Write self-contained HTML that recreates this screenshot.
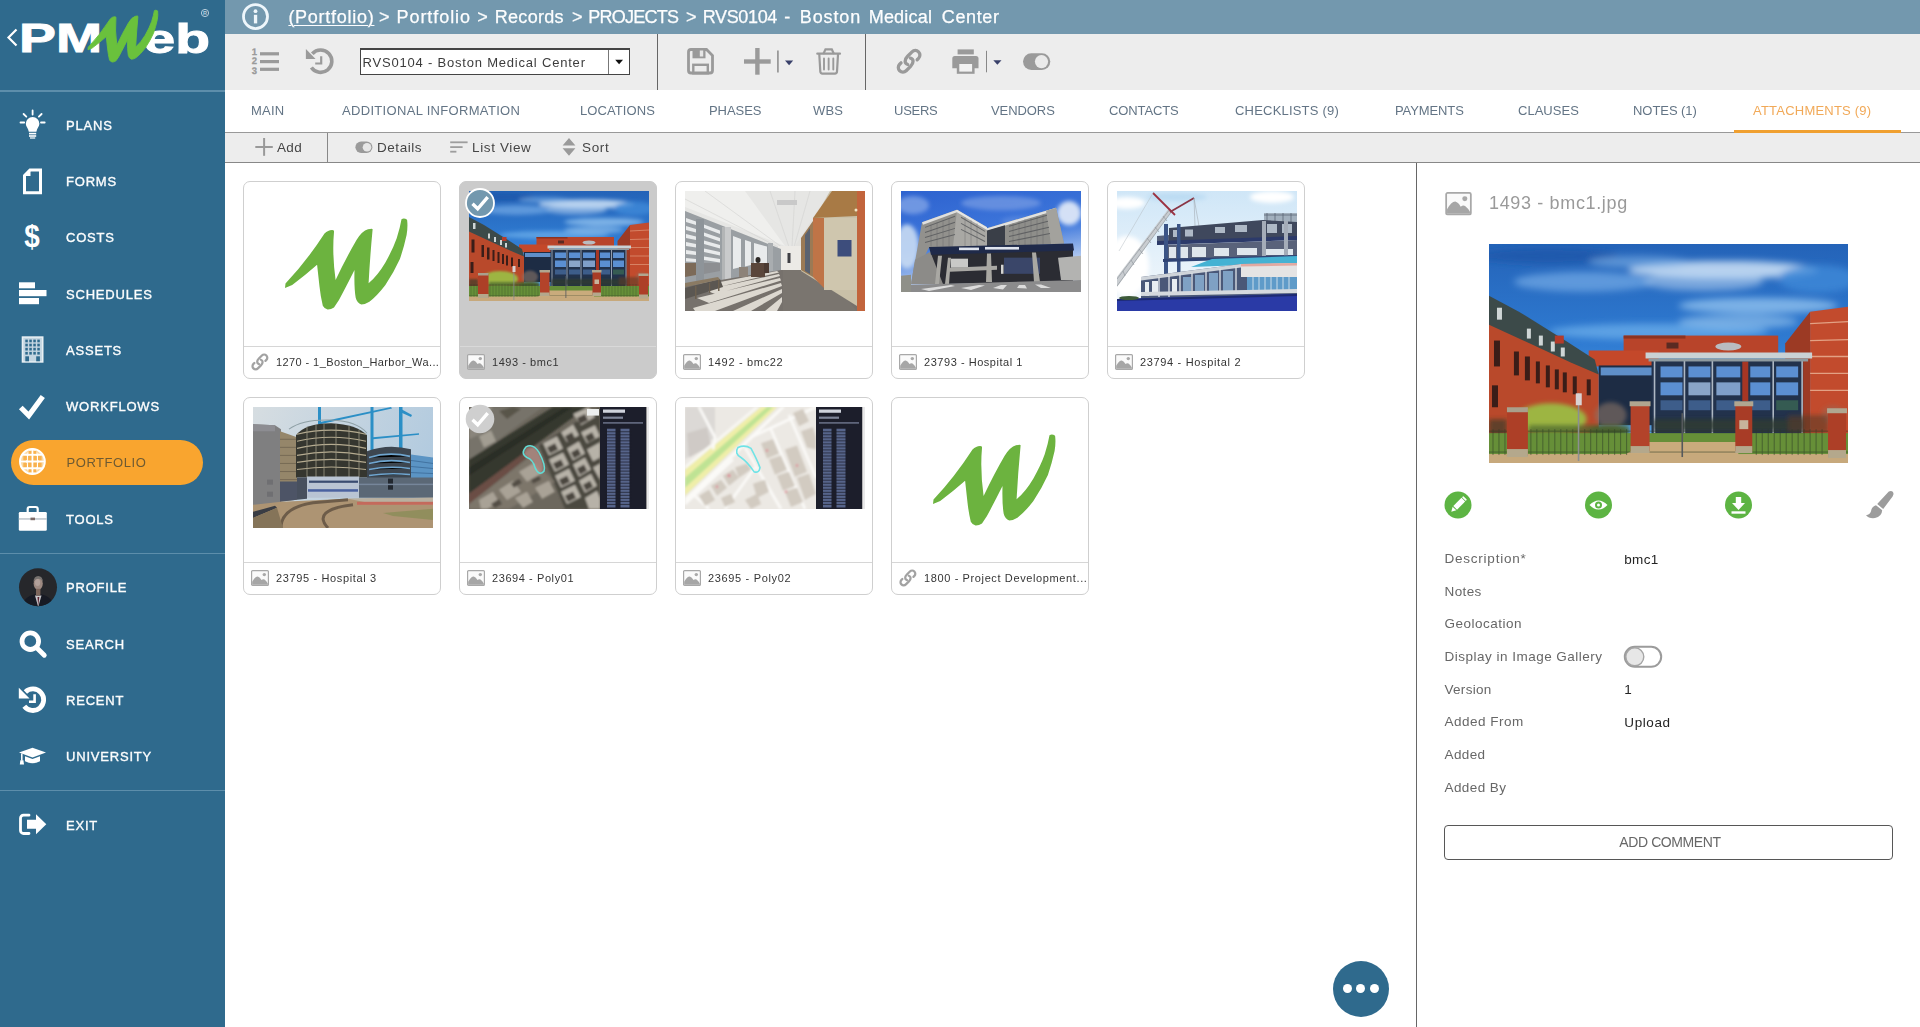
<!DOCTYPE html>
<html>
<head>
<meta charset="utf-8">
<title>PMWeb</title>
<style>
*{box-sizing:border-box;margin:0;padding:0}
html,body{width:1920px;height:1027px;overflow:hidden;background:#fff;font-family:"Liberation Sans",sans-serif;}
.abs{position:absolute}
#side{position:absolute;left:0;top:0;width:225px;height:1027px;background:#2f6a8d;}
#side .hr{position:absolute;left:0;width:225px;height:2px;background:#5d8eab;}
.mi{position:absolute;left:66px;color:#fff;font-size:13px;line-height:16px;white-space:nowrap;-webkit-text-stroke:0.35px #fff;letter-spacing:0.8px;margin-top:0.5px}
.ico{position:absolute;}
#pill{position:absolute;left:11px;top:440px;width:192px;height:45px;border-radius:23px;background:#f9a52f;}
#top{position:absolute;left:225px;top:0;width:1695px;height:34px;background:#7398ae;}
#crumb{position:absolute;left:0;top:6px;color:#fff;-webkit-text-stroke:0.25px #fff;font-size:18px;line-height:22px;white-space:nowrap}
#crumb span{position:absolute;top:0;white-space:nowrap}
#crumb u{text-decoration-thickness:1px;text-underline-offset:2px}
#tb{position:absolute;left:225px;top:34px;width:1695px;height:56px;background:#ededed;}
.vsep{position:absolute;width:1px;background:#666;}
#combo{position:absolute;left:360px;top:48px;width:270px;height:27px;background:#fff;border:1px solid #444;border-top:2px solid #444;}
#combo .t{position:absolute;left:1.5px;top:4.500px;font-size:13px;line-height:16px;color:#3a3a3a;letter-spacing:0.45px;white-space:nowrap}
#combo .b{position:absolute;right:0;top:0;width:21.500px;height:24px;border-left:1px solid #777;}
#tabs{position:absolute;left:225px;top:90px;width:1695px;height:43px;background:#fff;border-bottom:1px solid #999;}
.tab{position:absolute;top:103px;font-size:13px;line-height:16px;color:#56697b;opacity:0.92;letter-spacing:0.55px;white-space:nowrap}
#sub{position:absolute;left:225px;top:133px;width:1695px;height:30px;background:#ededed;border-bottom:1px solid #888;}
.st{position:absolute;top:140px;font-size:13.5px;line-height:16px;color:#444;letter-spacing:0.4px;white-space:nowrap}
.card{position:absolute;width:198px;height:198px;border:1px solid #cfcfcf;border-radius:7px;background:#fff;overflow:hidden}
.card.sel{background:#cbcbcb;border-color:#cbcbcb}
.card .ft{position:absolute;left:0;top:164px;width:196px;height:31px;border-top:1px solid #d6d6d6;}
.card.sel .ft{border-top-color:#d9d9d9}
.card .ft span{position:absolute;left:32px;top:7.500px;font-size:11px;line-height:14px;color:#333;letter-spacing:0.3px;white-space:nowrap}
.card .im{position:absolute;left:9px;top:9px;width:180px;overflow:hidden}
.card .im svg{display:block}
#rp{position:absolute;left:1416px;top:163px;width:504px;height:864px;border-left:1px solid #666;background:#fff}
.lb{position:absolute;left:1444.5px;font-size:13.5px;line-height:16px;color:#666;letter-spacing:0.5px;white-space:nowrap}
.vl{position:absolute;left:1624.3px;font-size:13.5px;line-height:16px;color:#222;letter-spacing:0.4px;white-space:nowrap}
#addc{position:absolute;left:1444px;top:825px;width:449px;height:35px;padding-left:3px;border:1px solid #555;border-radius:4px;text-align:center;font-size:14px;line-height:33px;color:#666;letter-spacing:-0.3px}
#fab{position:absolute;left:1333px;top:961px;width:56px;height:56px;border-radius:28px;background:#2f6a8d;}
#fab i{position:absolute;top:23px;width:9px;height:9px;border-radius:5px;background:#fff}
.mi,.st,.lb,.vl,.card .ft span,#combo .t,#crumb,#addc,.ttl{opacity:0.99}
</style>
</head>
<body>
<svg width="0" height="0" style="position:absolute">
<defs>
<symbol id="wlogo" viewBox="0 0 198 165">
<path d="M41,106 L41.5,101.5 Q62,80 80.5,51.5 Q84,48 88,48 Q90.5,48 90,50 Q88,72 91.6,98 Q102,76 112.5,58 Q118,49 124,47.3 Q129,46 128.6,47.5 Q126,75 124.6,101.3 Q134,93 141.4,80.4 Q149,67 152.7,56.3 Q156,46 157.5,37.3 Q160,35.5 163.1,37.8 Q164,45 162.6,53 Q160,65 155.9,77 Q150,90 141.4,103 Q133,114 125.4,119.7 Q121,122.5 117.3,122.5 Q113,121 111.7,115.7 Q110,106 110.5,88 Q105,99 99.6,109.3 Q95,119 90,125.4 Q87,127.5 83.6,127.4 Q80,126.5 78.8,123.8 Q76.5,114 75.5,104.5 L73.1,82.8 Q61,93.5 48.2,103 Z"/>
</symbol>
<symbol id="imgico" viewBox="0 0 18 16">
<rect x="0.600" y="0.600" width="16.800" height="14.800" rx="1" fill="#fafafa" stroke="#a8a8a8" stroke-width="1.200"/>
<path d="M1.200,14.800 L1.200,11.800 Q4,6.400 6.800,6.400 Q9,7 10.500,10 Q12,8.800 13.500,9.500 Q15.500,11 16.800,13.500 L16.800,14.800 Z" fill="#a6a6a6"/>
<circle cx="13.300" cy="4.600" r="1.700" fill="#a9a9a9"/>
</symbol>
<symbol id="lnkico" viewBox="-13 -13 26 26" overflow="visible">
<g fill="none" stroke-linecap="round" stroke-width="3.300" transform="rotate(-45)">
<path d="M-3.200,1.300 C-5,-1.800 -2.200,-4.600 2.500,-4.600 H8.750 a4.600,4.600 0 0 1 0,9.200 H6.800"/>
<path d="M3.200,-1.300 C5,1.800 2.200,4.600 -2.500,4.600 H-8.750 a4.600,4.600 0 0 1 0,-9.200 H-6.800"/>
</g>
</symbol>
<linearGradient id="sky1" x1="0" y1="0" x2="0" y2="1">
<stop offset="0" stop-color="#2463b8"/><stop offset="0.45" stop-color="#2f7bd2"/><stop offset="1" stop-color="#62aee8"/>
</linearGradient>
<filter id="b2" x="-20%" y="-20%" width="140%" height="140%"><feGaussianBlur stdDeviation="2"/></filter>
<filter id="b4" x="-20%" y="-40%" width="140%" height="180%"><feGaussianBlur stdDeviation="4"/></filter>
<filter id="b1" x="-10%" y="-10%" width="120%" height="120%"><feGaussianBlur stdDeviation="0.8"/></filter>
<symbol id="bmc1" viewBox="0 0 360 220" preserveAspectRatio="none">
<rect width="360" height="220" fill="url(#sky1)"/>
<g filter="url(#b4)">
<ellipse cx="235" cy="26" rx="95" ry="9" fill="#cfe3f7" opacity="0.85"/>
<ellipse cx="95" cy="38" rx="70" ry="10" fill="#6aa4e2" opacity="0.8"/>
<ellipse cx="270" cy="62" rx="80" ry="8" fill="#8fc0ee" opacity="0.8"/>
<ellipse cx="60" cy="12" rx="70" ry="8" fill="#1c55a6" opacity="0.7"/>
<ellipse cx="330" cy="35" rx="40" ry="14" fill="#3f8ad8" opacity="0.8"/>
<ellipse cx="170" cy="88" rx="110" ry="8" fill="#6fb2ec" opacity="0.7"/>
<ellipse cx="215" cy="38" rx="60" ry="9" fill="#b9d6f3" opacity="0.55"/>
<ellipse cx="150" cy="18" rx="50" ry="6" fill="#7fb0e6" opacity="0.6"/>
<ellipse cx="250" cy="78" rx="60" ry="7" fill="#9ccaf0" opacity="0.6"/>
</g>
<!-- center back brick -->
<rect x="135" y="92" width="155" height="20" fill="#b8442a"/>
<rect x="135" y="92" width="62" height="3" fill="#8c3320"/>
<rect x="100" y="107" width="70" height="16" fill="#c4482a"/>
<rect x="178" y="99" width="12" height="6" fill="#5a2a22"/>
<ellipse cx="240" cy="103" rx="13" ry="4" fill="#b9bcc0"/>
<!-- right building -->
<path d="M297,100 L322,68 L322,200 L297,200 Z" fill="#9c3a24"/>
<path d="M322,68 L360,63 L360,200 L322,200 Z" fill="#c24b2d"/>
<g stroke="#e3a184" stroke-width="1.3"><path d="M322,80 L360,78 M322,97 L360,96 M322,113 L360,113 M322,130 L360,130 M322,147 L360,147"/></g>
<!-- glass facade -->
<rect x="110" y="122" width="56" height="60" fill="#1d2c44"/>
<rect x="112" y="124" width="52" height="8" fill="#5f8fc8"/>
<rect x="163" y="117" width="152" height="74" fill="#22324c"/>
<g fill="#5b8fd2">
<rect x="172" y="123" width="22" height="11"/><rect x="200" y="123" width="22" height="11"/><rect x="228" y="123" width="24" height="11"/><rect x="262" y="123" width="20" height="11"/><rect x="288" y="123" width="22" height="11"/>
<rect x="172" y="139" width="22" height="13"/><rect x="200" y="139" width="22" height="13" fill="#8aa5c8"/><rect x="228" y="139" width="24" height="13" fill="#7f9fc9"/><rect x="262" y="139" width="20" height="13"/><rect x="288" y="139" width="22" height="13"/>
<rect x="172" y="157" width="22" height="10" fill="#3d5d8a"/><rect x="200" y="157" width="22" height="10" fill="#3d5d8a"/><rect x="228" y="157" width="24" height="10" fill="#3d5d8a"/><rect x="262" y="157" width="20" height="10" fill="#3d5d8a"/><rect x="288" y="157" width="22" height="10" fill="#355b52"/>
</g>
<rect x="254" y="118" width="6" height="40" fill="#a63624"/>
<g stroke="#aeb8c4" stroke-width="1.6"><path d="M166,117 V190 M196,117 V190 M224,117 V190 M255,160 V190 M285,117 V190 M314,117 V190"/></g>
<rect x="157" y="109" width="167" height="6" fill="#c9d1d4"/>
<rect x="160" y="115" width="160" height="3" fill="#8e9aa0"/>
<!-- left building -->
<path d="M0,80 L82,118 L110,130 L110,200 L0,200 Z" fill="#b9492b"/>
<path d="M0,52 L30,68 L78,98 L106,116 L110,131 L82,119 L0,81 Z" fill="#3c4a49"/>
<g fill="#cfd6d6"><rect x="8" y="64" width="5" height="12"/><rect x="38" y="85" width="4" height="10"/><rect x="50" y="92" width="4" height="10"/><rect x="62" y="98" width="4" height="10"/><rect x="72" y="104" width="4" height="9"/></g>
<rect x="66" y="92" width="9" height="8" fill="#b43b2a"/>
<g fill="#3a1d18"><rect x="5" y="97" width="6" height="26"/><rect x="25" y="108" width="5" height="24"/><rect x="36" y="113" width="5" height="24"/><rect x="47" y="118" width="4" height="22"/><rect x="57" y="122" width="4" height="22"/><rect x="66" y="126" width="4" height="20"/><rect x="74" y="129" width="4" height="20"/><rect x="84" y="133" width="4" height="18"/><rect x="98" y="136" width="4" height="16"/><rect x="3" y="142" width="6" height="22"/></g>
<!-- trees -->
<g filter="url(#b2)">
<ellipse cx="62" cy="176" rx="36" ry="16" fill="#9db542"/>
<ellipse cx="122" cy="172" rx="16" ry="13" fill="#8b7468" opacity="0.6"/>
<ellipse cx="345" cy="172" rx="12" ry="10" fill="#9a6a58" opacity="0.5"/>
<ellipse cx="120" cy="188" rx="20" ry="5" fill="#3b4a2a"/>
</g>
<g filter="url(#b2)"><rect x="0" y="176" width="18" height="22" fill="#3a3a2a" opacity="0.7"/><rect x="40" y="182" width="100" height="10" fill="#4d6a2c" opacity="0.75"/><rect x="165" y="176" width="150" height="12" fill="#2f3b30" opacity="0.8"/><rect x="300" y="172" width="40" height="18" fill="#5a3a2a" opacity="0.6"/></g>
<!-- lawn + path -->
<rect x="0" y="190" width="360" height="22" fill="#668f38"/>
<path d="M160,199 L250,199 L250,220 L120,220 Z" fill="#c9ab7c"/>
<rect x="0" y="211" width="360" height="9" fill="#c7a97c"/>
<!-- fence -->
<g stroke="#2c3a26" stroke-width="0.9" opacity="0.6">
<path d="M0,188 H360 M0,209 H360"/>
<path d="M4,186 V212 M10,186 V212 M16,186 V212 M42,186 V212 M48,186 V212 M54,186 V212 M60,186 V212 M66,186 V212 M72,186 V212 M78,186 V212 M84,186 V212 M90,186 V212 M96,186 V212 M102,186 V212 M108,186 V212 M114,186 V212 M120,186 V212 M126,186 V212 M132,186 V212 M138,186 V212 M268,186 V212 M274,186 V212 M280,186 V212 M286,186 V212 M292,186 V212 M298,186 V212 M304,186 V212 M310,186 V212 M316,186 V212 M322,186 V212 M328,186 V212 M334,186 V212"/>
</g>
<!-- pillars -->
<g>
<rect x="18" y="166" width="21" height="47" fill="#ad3f27"/><rect x="18" y="164" width="21" height="5" fill="#a9a08c"/><rect x="18" y="206" width="21" height="8" fill="#b4a88c"/>
<rect x="142" y="160" width="19" height="48" fill="#b3432a"/><rect x="141" y="158" width="21" height="5" fill="#b0a690"/><rect x="142" y="203" width="19" height="7" fill="#b4a88c"/>
<rect x="247" y="160" width="17" height="48" fill="#a83c26"/><rect x="246" y="158" width="19" height="5" fill="#b0a690"/><rect x="247" y="203" width="17" height="7" fill="#b4a88c"/><rect x="251" y="177" width="9" height="9" fill="#c7b59c"/>
<rect x="340" y="167" width="18" height="47" fill="#ad3f27"/><rect x="339" y="165" width="20" height="5" fill="#b0a690"/><rect x="340" y="207" width="18" height="8" fill="#b4a88c"/>
</g>
<rect x="89" y="150" width="1.6" height="68" fill="#8c8f92"/><rect x="87" y="150" width="6" height="12" fill="#d9d3d3"/>
<rect x="193" y="170" width="1.6" height="44" fill="#55595c"/>
</symbol>
</defs>
</svg>
<!-- SIDEBAR -->
<div id="side">
  <div class="hr" style="top:90px"></div>
  <div class="hr" style="top:553px;height:1px"></div>
  <div class="hr" style="top:790px;height:1px"></div>
  <div id="pill"></div>
  <svg class="ico" style="left:0;top:0" width="225" height="90" viewBox="0 0 225 90">
    <path d="M16.5,29.5 L8.5,37.5 L16.5,45.5" fill="none" stroke="#fff" stroke-width="2.2"/>
    <text x="19" y="52.400" font-family="Liberation Sans, sans-serif" font-weight="bold" font-size="41" fill="#fff" stroke="#fff" stroke-width="0.900" textLength="83" lengthAdjust="spacingAndGlyphs">PM</text>
    <text x="143.500" y="52.600" font-family="Liberation Sans, sans-serif" font-weight="bold" font-size="41.500" fill="#fff" stroke="#fff" stroke-width="0.900" textLength="66.500" lengthAdjust="spacingAndGlyphs">eb</text>
    <use href="#wlogo" x="64.600" y="-12.500" width="112.900" height="97.800" fill="#6ac13c" stroke="#6ac13c" stroke-width="1.600" stroke-linejoin="round"/>
    <circle cx="205" cy="13" r="3.6" fill="none" stroke="#b9cfdd" stroke-width="1"/>
    <text x="203.1" y="15.3" font-family="Liberation Sans, sans-serif" font-size="5.5" font-weight="bold" fill="#b9cfdd">R</text>
  </svg>
  <!-- plans bulb -->
  <svg class="ico" style="left:18px;top:108px" width="30" height="34" viewBox="18 108 30 34">
    <g stroke="#fff" stroke-width="1.8" stroke-linecap="round"><path d="M32.6,110.5 V114.5 M23.6,114 L26.3,116.7 M41.6,114 L38.9,116.7 M20.5,122.5 H24.2 M41,122.5 H44.7"/></g>
    <path d="M32.6,117 a6.8,6.8 0 0 1 6.8,6.8 c0,3 -2.6,4.6 -3,8 h-7.6 c-0.4,-3.4 -3,-5 -3,-8 a6.8,6.8 0 0 1 6.8,-6.800 Z" fill="#fff"/>
    <rect x="29" y="132.8" width="7.2" height="1.6" fill="#fff"/><rect x="29" y="135.2" width="7.2" height="1.6" fill="#fff"/><rect x="30" y="137.4" width="5.2" height="1.2" fill="#fff"/>
  </svg>
  <!-- forms -->
  <svg class="ico" style="left:20px;top:166px" width="26" height="32" viewBox="20 166 26 32">
    <path d="M30,170 H40.5 V192.700 H24.5 V175.500 Z" fill="none" stroke="#fff" stroke-width="3"/>
    <path d="M30.500,169 V176 H23.500 Z" fill="#fff"/>
  </svg>
  <!-- costs -->
  <svg class="ico" style="left:20px;top:220px" width="26" height="36" viewBox="20 220 26 36">
    <text x="24.200" y="247.300" font-family="Liberation Sans, sans-serif" font-weight="bold" font-size="31" fill="#fff" textLength="15.500" lengthAdjust="spacingAndGlyphs">$</text>
  </svg>
  <!-- schedules -->
  <svg class="ico" style="left:18px;top:280px" width="30" height="28" viewBox="18 280 30 28">
    <rect x="19" y="282.300" width="16" height="6" fill="#fff"/><rect x="19" y="290" width="27.500" height="6.200" fill="#fff"/><rect x="19" y="298" width="20" height="6.200" fill="#fff"/>
  </svg>
  <!-- assets -->
  <svg class="ico" style="left:20px;top:334px" width="26" height="32" viewBox="20 334 26 32">
    <rect x="21.700" y="336.300" width="21.800" height="26.400" fill="#e9f0f4"/>
    <rect x="23.300" y="337.800" width="18.600" height="23.400" fill="#c3d5e1"/>
    <g fill="#2f6a8d">
      <rect x="25.300" y="339.600" width="2.500" height="2.700"/><rect x="29.300" y="339.600" width="2.500" height="2.700"/><rect x="33.300" y="339.600" width="2.500" height="2.700"/><rect x="37.300" y="339.600" width="2.500" height="2.700"/>
      <rect x="25.300" y="343.700" width="2.500" height="2.700"/><rect x="29.300" y="343.700" width="2.500" height="2.700"/><rect x="33.300" y="343.700" width="2.500" height="2.700"/><rect x="37.300" y="343.700" width="2.500" height="2.700"/>
      <rect x="25.300" y="347.800" width="2.500" height="2.700"/><rect x="29.300" y="347.800" width="2.500" height="2.700"/><rect x="33.300" y="347.800" width="2.500" height="2.700"/><rect x="37.300" y="347.800" width="2.500" height="2.700"/>
      <rect x="25.300" y="351.900" width="2.500" height="2.700"/><rect x="29.300" y="351.900" width="2.500" height="2.700"/><rect x="33.300" y="351.900" width="2.500" height="2.700"/><rect x="37.300" y="351.900" width="2.500" height="2.700"/>
      <rect x="25.300" y="356.300" width="3.700" height="5"/><rect x="36.200" y="356.300" width="3.700" height="5"/>
    </g>
  </svg>
  <!-- workflows -->
  <svg class="ico" style="left:16px;top:390px" width="32" height="32" viewBox="16 390 32 32">
    <path d="M20.800,407.500 L28.800,415.500 L42.800,396.500" fill="none" stroke="#fff" stroke-width="5.200" stroke-linejoin="miter"/>
  </svg>
  <!-- portfolio globe -->
  <svg class="ico" style="left:17px;top:446px" width="32" height="32" viewBox="17 446 32 32">
    <circle cx="32.400" cy="461.500" r="12.400" fill="#fbd9a3" stroke="#fff" stroke-width="2"/>
    <g fill="none" stroke="#fff" stroke-width="1.700">
      <ellipse cx="32.400" cy="461.500" rx="5.600" ry="12.400"/>
      <path d="M32.400,449 V474 M20,461.500 H44.800 M22,454.700 H42.800 M22,468.300 H42.800"/>
    </g>
    <g fill="#f9b24e"><rect x="23.300" y="456" width="3.600" height="4.200"/><rect x="28.100" y="456" width="3.300" height="4.200"/><rect x="33.500" y="456" width="3.300" height="4.200"/><rect x="38" y="456" width="3.600" height="4.200"/><rect x="23.300" y="462.800" width="3.600" height="4.200"/><rect x="28.100" y="462.800" width="3.300" height="4.200"/><rect x="33.500" y="462.800" width="3.300" height="4.200"/><rect x="38" y="462.800" width="3.600" height="4.200"/><rect x="28.400" y="450.800" width="3" height="3"/><rect x="33.500" y="450.800" width="3" height="3"/><rect x="28.400" y="469.400" width="3" height="3"/><rect x="33.500" y="469.400" width="3" height="3"/></g>
  </svg>
  <!-- tools briefcase -->
  <svg class="ico" style="left:17px;top:503px" width="32" height="32" viewBox="17 503 32 32">
    <path d="M27.700,512.500 V509 a2,2 0 0 1 2,-2 h6 a2,2 0 0 1 2,2 V512.500" fill="none" stroke="#fff" stroke-width="2.200"/>
    <rect x="18.800" y="512" width="28" height="18.700" rx="1.200" fill="#fff"/>
    <rect x="18.800" y="518.300" width="28" height="1.300" fill="#b4bcc4"/>
    <rect x="30.500" y="517.600" width="4.500" height="2.600" fill="#7d6a66"/>
  </svg>
  <!-- profile photo -->
  <svg class="ico" style="left:18px;top:567px" width="40" height="40" viewBox="18 567 40 40">
    <defs><clipPath id="pc"><circle cx="38" cy="587.200" r="19"/></clipPath></defs>
    <circle cx="38" cy="587.200" r="19" fill="#26272b"/>
    <g clip-path="url(#pc)">
      <ellipse cx="38" cy="606" rx="15" ry="12" fill="#171a24"/>
      <path d="M35,595.500 L38.200,607 L41.500,595.500 Z" fill="#c9c7cb"/>
      <path d="M37.500,597 L38.200,606 L39.300,597 Z" fill="#5a2330"/>
      <ellipse cx="38.200" cy="583.600" rx="4.600" ry="6.300" fill="#9d8a82"/><ellipse cx="37.600" cy="582.500" rx="2.600" ry="3.600" fill="#b9aaa4" opacity="0.700"/>
      <path d="M33.400,582 q0.400,-6 4.800,-6 q4.400,0 4.800,6 q-1.800,-3.300 -4.800,-3.300 q-3,0 -4.800,3.300 Z" fill="#77726f"/>
      <rect x="36" y="588.800" width="4.400" height="6.800" fill="#7d665c"/>
    </g>
  </svg>
  <!-- search -->
  <svg class="ico" style="left:16px;top:627px" width="34" height="34" viewBox="16 627 34 34">
    <circle cx="30.300" cy="641.200" r="8.300" fill="none" stroke="#fff" stroke-width="4.800"/>
    <path d="M37.200,648.200 L44.300,655.300" stroke="#fff" stroke-width="4.800" stroke-linecap="round"/>
  </svg>
  <!-- recent -->
  <svg class="ico" style="left:16px;top:684px" width="34" height="34" viewBox="16 684 34 34">
    <path d="M25.400,691.900 A10.800,10.800 0 1 1 24.300,706.300" fill="none" stroke="#fff" stroke-width="4.800" />
    <path d="M18.800,687.700 L18.800,698.500 L29.600,698.500 Z" fill="#fff"/>
    <path d="M34.600,694.200 V701.800 H29" fill="none" stroke="#fff" stroke-width="2.600"/>
  </svg>
  <!-- university -->
  <svg class="ico" style="left:16px;top:742px" width="34" height="30" viewBox="16 742 34 30">
    <path d="M19,752.600 L32.500,747.800 L46,752.600 L32.500,757.400 Z" fill="#fff"/>
    <path d="M25,756.300 L32.500,759 L40,756.300 V761.300 q-7.500,4 -15,0 Z" fill="#fff"/>
    <path d="M21.800,753.600 V760.500" stroke="#fff" stroke-width="1.500"/>
    <path d="M20.400,760.300 h3 l0.600,4.200 h-4.200 Z" fill="#fff"/>
  </svg>
  <!-- exit -->
  <svg class="ico" style="left:16px;top:810px" width="34" height="30" viewBox="16 811 34 30">
    <path d="M29,816.200 H23.500 a3,3 0 0 0 -3,3 V831.500 a3,3 0 0 0 3,3 H29" fill="none" stroke="#fff" stroke-width="2.800" stroke-linecap="round"/>
    <path d="M27,820.800 H36 V815.300 L46.300,825.300 L36,835.300 V829.800 H27 Z" fill="#fff"/>
  </svg>
  <div class="mi" style="top:117px">PLANS</div>
  <div class="mi" style="top:173px">FORMS</div>
  <div class="mi" style="top:229px">COSTS</div>
  <div class="mi" style="top:286px">SCHEDULES</div>
  <div class="mi" style="top:342px">ASSETS</div>
  <div class="mi" style="top:398px">WORKFLOWS</div>
  <div class="mi" style="top:454px;color:#6d5a33;-webkit-text-stroke:0;letter-spacing:0.55px;left:66.500px">PORTFOLIO</div>
  <div class="mi" style="top:511px">TOOLS</div>
  <div class="mi" style="top:579px">PROFILE</div>
  <div class="mi" style="top:636px">SEARCH</div>
  <div class="mi" style="top:692px">RECENT</div>
  <div class="mi" style="top:748px">UNIVERSITY</div>
  <div class="mi" style="top:817px">EXIT</div>
</div>

<!-- TOP BAR -->
<div id="top"></div>
<div id="crumb"><span style="left:288.4px;letter-spacing:0.73px"><u>(Portfolio)</u></span><span style="left:378.9px;letter-spacing:0.00px">&gt;</span><span style="left:396.5px;letter-spacing:0.94px">Portfolio</span><span style="left:477.2px;letter-spacing:0.00px">&gt;</span><span style="left:494.7px;letter-spacing:0.31px">Records</span><span style="left:572.0px;letter-spacing:0.00px">&gt;</span><span style="left:588.3px;letter-spacing:-0.77px">PROJECTS</span><span style="left:685.9px;letter-spacing:0.00px">&gt;</span><span style="left:702.8px;letter-spacing:-0.37px">RVS0104</span><span style="left:784.2px;letter-spacing:0.00px">-</span><span style="left:799.8px;letter-spacing:0.87px">Boston</span><span style="left:868.7px;letter-spacing:0.21px">Medical</span><span style="left:941.8px;letter-spacing:0.61px">Center</span></div>

<!-- TOOLBAR -->
<div id="tb"></div>
<div class="vsep" style="left:657px;top:34px;height:56px"></div>
<div class="vsep" style="left:865px;top:34px;height:56px"></div>
<div id="combo"><div class="t" style="letter-spacing:0.80px">RVS0104 - Boston Medical Center</div><div class="b"></div></div>
<svg class="abs" style="left:240px;top:0" width="40" height="34" viewBox="240 0 40 34">
  <circle cx="255.500" cy="16.600" r="12" fill="none" stroke="#eef6fb" stroke-width="2.800"/>
  <rect x="253.900" y="14.800" width="3.300" height="8.600" fill="#eef6fb"/><circle cx="255.500" cy="11.200" r="1.900" fill="#eef6fb"/>
</svg>
<svg class="abs" style="left:240px;top:40px" width="830" height="45" viewBox="240 40 830 45">
  <!-- list-ol -->
  <g fill="#9a9a9a">
    <rect x="260" y="52.200" width="19" height="3.200"/><rect x="260" y="60" width="19" height="3.200"/><rect x="260" y="67.700" width="19" height="3.200"/>
    <text x="251.800" y="54.800" font-family="Liberation Sans, sans-serif" font-weight="bold" font-size="9.500" stroke="#9a9a9a" stroke-width="0.300" text-rendering="geometricPrecision">1</text>
    <text x="251.800" y="64.200" font-family="Liberation Sans, sans-serif" font-weight="bold" font-size="9.500" stroke="#9a9a9a" stroke-width="0.300" text-rendering="geometricPrecision">2</text>
    <text x="251.800" y="73.800" font-family="Liberation Sans, sans-serif" font-weight="bold" font-size="9.500" stroke="#9a9a9a" stroke-width="0.300" text-rendering="geometricPrecision">3</text>
  </g>
  <!-- history -->
  <path d="M312.300,53.700 A11.200,11.200 0 1 1 311.400,67.500" fill="none" stroke="#9a9a9a" stroke-width="3.600"/>
  <path d="M305.900,48.900 L305.900,59 L315.600,59 Z" fill="#9a9a9a"/>
  <path d="M321.200,56.300 V63.500 H315.200" fill="none" stroke="#9a9a9a" stroke-width="2.200"/>
  <!-- combo arrow -->
  <path d="M615.200,59.800 H623 L619.100,64.200 Z" fill="#111"/>
  <!-- save -->
  <path d="M688.500,52 a2.500,2.500 0 0 1 2.500,-2.500 H706.500 L712.500,55.500 V70.500 a2.500,2.500 0 0 1 -2.500,2.500 H691 a2.500,2.500 0 0 1 -2.500,-2.500 Z" fill="none" stroke="#9a9a9a" stroke-width="2.800"/>
  <rect x="692.500" y="49" width="13" height="9.300" fill="#9a9a9a"/><rect x="699.800" y="50.500" width="3.400" height="6" fill="#e6e6e6"/>
  <rect x="693.300" y="64.800" width="14.500" height="8.500" fill="none" stroke="#9a9a9a" stroke-width="2.400"/>
  <!-- plus -->
  <rect x="744" y="59.300" width="26.700" height="4.400" fill="#9a9a9a"/><rect x="755.200" y="48" width="4.400" height="26.700" fill="#9a9a9a"/>
  <rect x="777" y="50.500" width="1.800" height="22" fill="#9a9a9a"/>
  <path d="M785,60.600 H793.200 L789.100,65.200 Z" fill="#39406a"/>
  <!-- trash -->
  <g fill="none" stroke="#9a9a9a" stroke-width="2.200" stroke-linecap="round">
    <path d="M817.300,53.700 H840"/>
    <path d="M823.700,53.200 L825.500,49.300 H831.800 L833.600,53.200"/>
    <path d="M819.300,54.500 L820.300,71.500 a2.200,2.200 0 0 0 2.200,2.100 H834.800 a2.200,2.200 0 0 0 2.200,-2.100 L838,54.500"/>
    <path d="M824,58.500 V69.500 M828.650,58.500 V69.500 M833.300,58.500 V69.500" stroke-width="1.900"/>
  </g>
  <!-- link -->
  <use href="#lnkico" x="896.100" y="48.300" width="26" height="26" stroke="#9a9a9a"/>
  <!-- print -->
  <g fill="#9a9a9a">
    <rect x="957.600" y="49.400" width="16.200" height="5" />
    <path d="M952.300,58.500 a2.500,2.500 0 0 1 2.500,-2.500 H976 a2.500,2.500 0 0 1 2.500,2.500 V68.200 H952.300 Z"/>
    <rect x="956.800" y="62" width="17.800" height="11.800"/>
    <rect x="959.300" y="64" width="12.800" height="7.600" fill="#f2f2f2"/>
  </g>
  <rect x="986" y="50.800" width="1" height="21.500" fill="#888"/>
  <path d="M993.300,60.200 H1001.500 L997.400,64.800 Z" fill="#39406a"/>
  <!-- toggle -->
  <rect x="1023" y="53.200" width="27.300" height="16.800" rx="8.400" fill="#9a9a9a"/>
  <circle cx="1041.500" cy="61.600" r="6.600" fill="#eaeaea"/>
</svg>

<!-- TABS -->
<div id="tabs"></div>
<div class="tab" style="left:251px;letter-spacing:0.23px">MAIN</div>
<div class="tab" style="left:342px;letter-spacing:0.32px">ADDITIONAL INFORMATION</div>
<div class="tab" style="left:580px;letter-spacing:0.08px">LOCATIONS</div>
<div class="tab" style="left:709px;letter-spacing:-0.05px">PHASES</div>
<div class="tab" style="left:813px;letter-spacing:0.19px">WBS</div>
<div class="tab" style="left:894px;letter-spacing:-0.25px">USERS</div>
<div class="tab" style="left:991px;letter-spacing:-0.08px">VENDORS</div>
<div class="tab" style="left:1109px;letter-spacing:-0.12px">CONTACTS</div>
<div class="tab" style="left:1235px;letter-spacing:0.20px">CHECKLISTS (9)</div>
<div class="tab" style="left:1395px;letter-spacing:-0.10px">PAYMENTS</div>
<div class="tab" style="left:1518px;letter-spacing:0.02px">CLAUSES</div>
<div class="tab" style="left:1633px;letter-spacing:-0.05px">NOTES (1)</div>
<div class="tab" style="left:1753px;color:#f0a24a;letter-spacing:0.22px">ATTACHMENTS (9)</div>
<div class="abs" style="left:1734px;top:130px;width:167px;height:3px;background:#f0a030"></div>

<!-- SUB TOOLBAR -->
<div id="sub"></div>
<div class="vsep" style="left:327px;top:133px;height:30px;background:#888"></div>
<div class="st" style="left:277px;letter-spacing:0.33px">Add</div>
<div class="st" style="left:377px;letter-spacing:0.54px">Details</div>
<div class="st" style="left:472px;letter-spacing:0.63px">List View</div>
<div class="st" style="left:582px;letter-spacing:0.64px">Sort</div>
<svg class="abs" style="left:250px;top:134px" width="340" height="28" viewBox="250 134 340 28">
  <rect x="255.300" y="146" width="17.500" height="2" fill="#999"/><rect x="263.100" y="138" width="2" height="17.800" fill="#999"/>
  <rect x="355.400" y="141.500" width="17" height="11.400" rx="5.700" fill="#9a9a9a"/><circle cx="367" cy="147.200" r="4.300" fill="#e6e6e6"/>
  <rect x="450.200" y="141.400" width="17.400" height="1.800" fill="#9d9d9d"/><rect x="450.200" y="146.200" width="12.400" height="1.800" fill="#9d9d9d"/><rect x="450.200" y="150.800" width="6.200" height="1.800" fill="#9d9d9d"/>
  <path d="M562.600,145.500 L569,138 L575.400,145.500 Z M562.600,148.300 L569,155.800 L575.400,148.300 Z" fill="#9a9a9a"/>
</svg>

<!-- CARDS -->
<div class="card" style="left:243px;top:181px"><svg class="abs" style="left:0;top:0" width="198" height="165"><use href="#wlogo" width="198" height="165" fill="#6cb33f"/></svg><div class="ft"><svg class="abs" style="left:7.100px;top:6.100px;overflow:visible" width="17.800" height="17.800"><use href="#lnkico" width="17.800" height="17.800" stroke="#a2a2a2"/></svg><span style="letter-spacing:0.41px">1270 - 1_Boston_Harbor_Wa...</span></div></div>
<div class="card sel" style="left:459px;top:181px"><div class="im" style="height:110px"><svg width="180" height="110"><use href="#bmc1" width="180" height="110"/></svg></div><svg class="abs" style="left:4px;top:4.500px" width="32" height="32" viewBox="0 0 32 32"><circle cx="16" cy="16" r="14" fill="#7398ae" stroke="#fff" stroke-width="1.800"/><path d="M8.500,16.800 L13.700,21.800 L23.700,10.200" fill="none" stroke="#fff" stroke-width="3.400"/></svg><div class="ft"><svg class="abs" style="left:7.200px;top:6.900px" width="18" height="16"><use href="#imgico" width="18" height="16"/></svg><span style="letter-spacing:0.55px">1493 - bmc1</span></div></div>
<div class="card" style="left:675px;top:181px"><div class="im" style="height:120px"><svg width="180" height="120" viewBox="0 0 180 120">
<rect width="180" height="120" fill="#e3e2df"/>
<!-- ceiling -->
<path d="M0,0 H145 L108,58 L96,58 L0,20 Z" fill="#e6e6e4"/>
<path d="M0,0 H60 L100,55 L0,16 Z" fill="#efefed"/>
<g stroke="#d2d2d0" stroke-width="0.600" fill="none"><path d="M85,0 L104,56 M110,0 L107,56 M125,0 L109,56 M20,0 L98,57 M0,8 L97,58"/></g>
<rect x="92" y="9" width="20" height="5" fill="#c9c9c9"/>
<!-- far end -->
<rect x="93" y="55" width="24" height="25" fill="#eceae6"/>
<!-- left window wall -->
<path d="M0,20 L96,58 L96,80 L0,95 Z" fill="#9a9fa3"/>
<g fill="#e9ebec"><path d="M1,27 L11,30.500 V34 L1,31 Z M1,35 L11,38 V41.500 L1,39 Z M1,43 L11,45.500 V49 L1,47 Z M1,51 L11,53 V56.500 L1,55 Z M1,59 L11,60.500 V64 L1,63 Z M1,67 L11,68 V71 L1,70.500 Z"/>
<path d="M19,33.500 L35,39.500 V43 L19,37 Z M19,41.500 L35,47 V50.500 L19,45 Z M19,49.500 L35,54 V57.500 L19,53 Z M19,57.500 L35,61 V64.500 L19,61 Z M19,65.500 L35,68 V71.500 L19,69 Z"/>
<path d="M48,45 L56,48 V76 L48,78 Z M60,49 L66,51 V74 L60,75.500 Z M69,52 L82,55.500 V72 L69,74 Z"/></g>
<path d="M0,72 L11,72 V84 L0,86 Z" fill="#7c6a58"/><path d="M19,72 L35,72 V80 L19,83 Z" fill="#8d8f92"/>
<rect x="11" y="28" width="8" height="62" fill="#8e9499"/>
<rect x="37" y="36" width="9" height="55" fill="#c9cacb"/><rect x="37" y="36" width="3" height="55" fill="#b3b5b6"/>
<rect x="83" y="52" width="5" height="28" fill="#a9adb0"/>
<!-- floor -->
<path d="M0,95 L96,79 L172,79 L180,120 L0,120 Z" fill="#76716c"/>
<path d="M98,79 L98,120 L172,120 L138,79 Z" fill="#7a756f"/>
<g fill="#dcd8d0"><path d="M30,92 L92,80 L94,81.500 L38,95 Z M20,99 L94,83 L95,85 L30,103 Z M12,107 L95,87 L96,89.500 L24,112 Z M8,117 L96,92 L97,95 L30,120 L10,120 Z M48,120 L97,98 L97,102 L66,120 Z M80,120 L97,106 L97,111 L92,120 Z"/></g>
<path d="M0,97 L35,88 L38,96 L0,108 Z" fill="#5b5752"/>
<!-- bench -->
<path d="M0,92 L33,86 L35,88.500 L0,96 Z" fill="#8a7a63"/><rect x="10" y="95" width="1.500" height="13" fill="#6d604f"/><rect x="33" y="89" width="1.500" height="11" fill="#6d604f"/><rect x="24" y="92" width="1.200" height="10" fill="#6d604f"/>
<!-- chairs/people -->
<path d="M66,72 H80 V86 H66 Z" fill="#5a463b"/><path d="M54,76 H63 V86 H54 Z" fill="#8d8379"/><ellipse cx="73" cy="69" rx="2.500" ry="3" fill="#2e2a28"/><rect x="79" y="72" width="5" height="10" fill="#4b3a32"/>
<rect x="102.500" y="62" width="3" height="10" fill="#3f3f44"/>
<!-- right wall -->
<path d="M180,0 H145 L116,52 V80 L180,120 Z" fill="#c9c0a8"/>
<path d="M180,0 H147 L128,27 L172,25 L180,24 Z" fill="#a87a45"/>
<path d="M128,27 L139,27 L139,97 L128,86 Z" fill="#bf7447"/>
<path d="M116,47 L128,30 L128,86 L116,79 Z" fill="#9b7a55"/><path d="M120,44 L125,37 L125,83 L120,80 Z" fill="#5a6270"/>
<rect x="139" y="27" width="33" height="72" fill="#cfc6ae"/>
<rect x="172" y="0" width="8" height="120" fill="#c2643c"/>
<rect x="152.500" y="49" width="14" height="16.500" fill="#3d4d7c"/>
<circle cx="171" cy="19" r="1.500" fill="#f3e6c6"/>
</svg></div><div class="ft"><svg class="abs" style="left:7.200px;top:6.900px" width="18" height="16"><use href="#imgico" width="18" height="16"/></svg><span style="letter-spacing:0.68px">1492 - bmc22</span></div></div>
<div class="card" style="left:891px;top:181px"><div class="im" style="height:101px"><svg width="180" height="101" viewBox="0 0 180 100" preserveAspectRatio="none">
<defs><linearGradient id="sky4" x1="0" y1="0" x2="0.300" y2="1"><stop offset="0" stop-color="#2d62cf"/><stop offset="0.550" stop-color="#3f78dc"/><stop offset="1" stop-color="#dfe9f7"/></linearGradient></defs>
<rect width="180" height="100" fill="url(#sky4)"/>
<g filter="url(#b2)"><ellipse cx="12" cy="14" rx="16" ry="9" fill="#7ea3e6" opacity="0.800"/><ellipse cx="100" cy="12" rx="40" ry="7" fill="#6f97e2" opacity="0.800"/><ellipse cx="168" cy="22" rx="12" ry="12" fill="#e4ecf8" opacity="0.900"/><ellipse cx="6" cy="55" rx="12" ry="22" fill="#c9dbf3" opacity="0.900"/><ellipse cx="120" cy="30" rx="20" ry="5" fill="#5c8adf" opacity="0.700"/></g>
<!-- left wing -->
<path d="M10,92 L21,31 L56,18.500 L86,36 L86,56 L28,56 Z" fill="#92918d"/>
<path d="M56,18.500 L86,36 L86,55 L52,55 Z" fill="#a9a8a4"/>
<path d="M21,31 L56,18.500 L56,21 L22,33.500 Z" fill="#e0e0de"/><path d="M56,18.500 L86,36 L86,38.500 L56,21 Z" fill="#e6e6e4"/>
<!-- right wing -->
<path d="M86,37 L155,16.500 L163,52 L86,56 Z" fill="#8e8e8a"/>
<path d="M86,37 L155,16.500 L155.500,19 L86,39.500 Z" fill="#e2e2e0"/>
<path d="M145,19.500 L155,16.500 L163,52 L150,52.500 Z" fill="#a3a29d"/>
<path d="M86,39 L104,34 L104,54 L86,55 Z" fill="#3a3f48"/>
<g stroke="#55575a" stroke-width="1" opacity="0.800"><path d="M24,36 L54,25 M24,41 L54,31 M24,46 L54,37 M24,51 L54,43 M60,26 L84,40 M60,32 L84,45 M60,38 L84,50 M108,35 L146,24 M108,40 L147,30 M108,45 L148,36 M108,50 L149,42"/></g>
<g stroke="#5d5f62" stroke-width="0.600" opacity="0.600"><path d="M30,33 V55 M36,31 V55 M42,29 V55 M48,27 V55 M64,26 V55 M70,29 V55 M76,32 V55 M112,32 V54 M118,30 V54 M124,28 V54 M130,27 V54 M136,25 V54 M142,23 V53"/></g>
<!-- lower left wall -->
<path d="M10,92 L14,68 L30,60 L46,92 Z" fill="#8c8b88"/>
<!-- under canopy -->
<path d="M30,62 L172,58 L172,90 L42,92 Z" fill="#2b2c33"/>
<rect x="50" y="67" width="17" height="9" fill="#c9c9c7"/><path d="M49,76 L96,74 L96,78 L49,80 Z" fill="#a9a8a4"/>
<rect x="103" y="66" width="36" height="16" fill="#3a4669"/><rect x="100" y="73" width="2.500" height="9" fill="#d4d4d2"/>
<path d="M157,66 L180,64 L180,88 L160,88 Z" fill="#b3b3b1"/>
<g fill="#a9a8a3"><path d="M37,64 L41,64 L38,92 L34,92 Z M47,66 L50,66 L48,92 L44,92 Z M86,62 L90,62 L91,90 L85,90 Z M131,61 L135,61 L139,90 L133,90 Z"/></g>
<!-- canopy -->
<path d="M28,55.500 L172,52 L173,59 L30,63 Z" fill="#1f2a4a"/>
<g fill="#dfe4ee"><rect x="58" y="56" width="20" height="2.600"/><rect x="84" y="55.400" width="34" height="2.600"/></g>
<!-- ground -->
<path d="M0,93 L180,88 L180,100 L0,100 Z" fill="#8b8b8c"/>
<path d="M0,84 L10,83 L10,100 L0,100 Z" fill="#8f9089"/>
<g fill="#dcdcdc"><path d="M20,97 L50,93 L54,94 L28,99 Z M60,96 L78,93 L84,93.500 L70,98 Z M92,96 L100,93 L106,93 L102,97.500 Z M116,96 L118,93 L124,93 L126,96.500 Z M140,96 L134,92.500 L140,92.500 L150,96 Z"/></g>
</svg></div><div class="ft"><svg class="abs" style="left:7.200px;top:6.900px" width="18" height="16"><use href="#imgico" width="18" height="16"/></svg><span style="letter-spacing:0.54px">23793 - Hospital 1</span></div></div>
<div class="card" style="left:1107px;top:181px"><div class="im" style="height:120px"><svg width="180" height="120" viewBox="0 0 180 120">
<defs><linearGradient id="sky5" x1="0" y1="0" x2="0" y2="1"><stop offset="0" stop-color="#cfe6f7"/><stop offset="0.500" stop-color="#e3f0fa"/><stop offset="1" stop-color="#f4f8fb"/></linearGradient></defs>
<rect width="180" height="120" fill="url(#sky5)"/>
<g filter="url(#b2)"><ellipse cx="10" cy="12" rx="18" ry="6" fill="#fff"/><ellipse cx="155" cy="6" rx="22" ry="6" fill="#fff"/><ellipse cx="10" cy="75" rx="22" ry="30" fill="#fff"/><ellipse cx="60" cy="6" rx="30" ry="4" fill="#bcdcf3"/></g>
<!-- crane boom -->
<path d="M0,86 L52,17 L55,20 L0,96 Z" fill="#c9cdd1"/>
<g stroke="#8c9298" stroke-width="0.600"><path d="M0,88 L53,18 M0,95 L55,20 M6,80 L8,85 M14,69 L17,74 M22,58 L26,63 M30,47 L34,52 M38,36 L42,41 M46,25 L50,30"/></g>
<path d="M36,2 L58,24" stroke="#9b3040" stroke-width="1.800"/><path d="M77,7 L53,21" stroke="#8a3545" stroke-width="1.800"/><path d="M77,7 L82,35 M77,7 L78,35" stroke="#9aa0a6" stroke-width="0.500"/>
<path d="M36,2 L2,60" stroke="#b5bcc2" stroke-width="0.500"/>
<!-- top floor -->
<rect x="147" y="22" width="33" height="10" fill="#7e8996" opacity="0.600"/>
<g stroke="#55606e" stroke-width="0.700"><path d="M150,22 V32 M158,22 V32 M166,22 V32 M174,22 V32 M147,24 H180"/></g>
<path d="M52,37 L146,29 L180,31 L180,47 L52,52 Z" fill="#3f485d"/>
<path d="M40,45 L52,44 L52,53 L40,54 Z" fill="#55607a"/>
<g fill="#aeb9c6"><rect x="56" y="39" width="7" height="7"/><rect x="68" y="38.500" width="8" height="7"/><rect x="98" y="36" width="10" height="6"/><rect x="118" y="34" width="12" height="7"/><rect x="150" y="33" width="10" height="9"/><rect x="165" y="33" width="10" height="9"/></g>
<path d="M40,50 L180,45 L180,49 L40,54 Z" fill="#2c3a6a"/>
<!-- mid floor -->
<path d="M48,54 L180,49 L180,67 L48,69 Z" fill="#59627a"/>
<g fill="#dfe6ec"><rect x="52" y="56" width="7" height="11"/><rect x="62" y="56" width="9" height="11"/><rect x="75" y="56" width="14" height="10"/><rect x="97" y="57" width="15" height="8"/><rect x="120" y="57" width="20" height="7"/><rect x="148" y="58" width="28" height="6"/></g>
<rect x="47" y="33" width="4" height="50" fill="#3b5486"/><rect x="60" y="33" width="3.500" height="48" fill="#3b5486"/><rect x="145" y="30" width="4" height="36" fill="#a4acb8"/><rect x="167" y="30" width="4" height="36" fill="#a4acb8"/>
<path d="M46,68 L180,64 L180,67 L46,71 Z" fill="#2f4374"/>
<path d="M95,68 L180,65 L180,72 L74,76 Z" fill="#45b2d3"/>
<!-- lower floor -->
<path d="M24,86 L124,73 L180,72 L180,106 L24,108 Z" fill="#4a5878"/>
<path d="M124,73 L180,72 L180,86 L124,86 Z" fill="#e5e4e4"/><path d="M124,73 L180,72 L180,74.500 L124,75.500 Z" fill="#e2a9a1"/>
<path d="M130,86 H180 V100 H130 Z" fill="#5f9bc9"/><g stroke="#e6edf3" stroke-width="0.800"><path d="M136,86 V100 M142,86 V100 M148,86 V100 M154,86 V100 M160,86 V100 M166,86 V100 M172,86 V100"/></g>
<path d="M24,86 L124,73 L124,76.500 L24,89.500 Z" fill="#cfd4da"/>
<g fill="#e8edf1"><rect x="28" y="91" width="4" height="14"/><rect x="35" y="90" width="6" height="14"/><rect x="55" y="88" width="5" height="15"/></g>
<g fill="#7fa1c4"><rect x="66" y="86" width="8" height="17"/><rect x="78" y="84" width="9" height="18"/><rect x="92" y="82" width="9" height="19"/><rect x="106" y="80" width="10" height="20"/></g>
<g stroke="#dfe4e8" stroke-width="1.300"><path d="M42,86 V106 M52,85 V106 M63,83 V104 M75,82 V104 M89,80 V103 M103,78 V102 M119,76 V101"/></g>
<path d="M24,101 L180,98 L180,102 L24,105 Z" fill="#d5d9de"/>
<!-- fence -->
<path d="M0,108 L180,103 L180,120 L0,120 Z" fill="#2a3aa6"/>
<path d="M0,108 L180,103 L180,105 L0,110 Z" fill="#1d2a72"/>
<ellipse cx="12" cy="107" rx="10" ry="2" fill="#3d5a3a"/>
</svg></div><div class="ft"><svg class="abs" style="left:7.200px;top:6.900px" width="18" height="16"><use href="#imgico" width="18" height="16"/></svg><span style="letter-spacing:0.66px">23794 - Hospital 2</span></div></div>
<div class="card" style="left:243px;top:397px"><div class="im" style="height:121px"><svg width="180" height="121" viewBox="0 0 180 120" preserveAspectRatio="none">
<defs><linearGradient id="sky6" x1="0" y1="0" x2="1" y2="0.300"><stop offset="0" stop-color="#d6dde1"/><stop offset="1" stop-color="#b3cbdf"/></linearGradient></defs>
<rect width="180" height="120" fill="url(#sky6)"/>
<!-- cranes -->
<g fill="#2b8fc6"><rect x="65" y="0" width="3" height="17"/><rect x="117.500" y="0" width="3" height="44"/><rect x="146" y="0" width="3.500" height="72"/>
<path d="M66,15 L138,0 L139,1.500 L67,17 Z"/><path d="M120,30 L166,26 L166,27.500 L120,32 Z"/><path d="M148,2 L159,8 L158,10 L147,5 Z"/></g>
<!-- left gray bldg -->
<path d="M0,17 L22,18 L28,22 L28,96 L0,98 Z" fill="#7f7f80"/>
<path d="M0,17 L22,18 L22,24 L0,24 Z" fill="#8d8d92"/>
<rect x="14" y="72" width="6" height="5" fill="#6f6f72"/><rect x="14" y="84" width="6" height="5" fill="#6f6f72"/>
<!-- scaffold part -->
<path d="M27,24 L44,30 L44,92 L27,94 Z" fill="#95866a"/>
<g stroke="#6a5f4c" stroke-width="0.700"><path d="M27,32 H44 M27,40 H44 M27,48 H44 M27,56 H44 M27,64 H44 M27,72 H44"/></g>
<path d="M27,74 L44,74 L44,92 L27,94 Z" fill="#4d5466"/>
<!-- main round bldg -->
<path d="M43,28 Q52,16 78,16 Q104,17 114,28 L114,70 L43,70 Z" fill="#35362f"/>
<path d="M36,22 Q50,12 78,13 Q104,14 114,26" fill="none" stroke="#8fa0a6" stroke-width="1"/>
<g stroke="#b5ab90" stroke-width="1.200" fill="none"><path d="M44,34 Q78,26 113,34 M44,41 Q78,33 113,41 M44,48 Q78,41 113,48 M44,55 Q78,49 113,55 M44,62 Q78,57 113,62 M44,27 Q78,19 113,27"/></g>
<g stroke="#9c9782" stroke-width="0.800"><path d="M54,20 V70 M63,18 V70 M71,17 V70 M83,17 V70 M96,19 V70 M106,23 V70"/></g>
<!-- right bldgs -->
<path d="M114,44 Q135,36 158,42 L158,72 L114,72 Z" fill="#3d4650"/>
<g stroke="#6fa5cf" stroke-width="1.600"><path d="M116,50 Q136,44 157,49 M116,56 Q136,51 157,55 M116,62 Q136,58 157,61 M116,68 Q136,65 157,67"/></g>
<path d="M158,47 L180,50 L180,74 L158,72 Z" fill="#5b94c4"/>
<g stroke="#3f6f9c" stroke-width="0.900"><path d="M158,53 L180,56 M158,59 L180,61 M158,65 L180,66"/></g>
<!-- lower cladding -->
<path d="M54,69 H106 V90 H54 Z" fill="#b9c4d3"/><rect x="56" y="73" width="49" height="2.200" fill="#3a4c70"/><rect x="55" y="81.500" width="50" height="2.500" fill="#4a62a0"/>
<path d="M106,70 H180 V90 H106 Z" fill="#5b6876"/><rect x="135" y="71" width="5" height="11" fill="#222830"/><rect x="106" y="76" width="74" height="1.500" fill="#76869a"/>
<path d="M44,70 L54,70 L54,91 L44,92 Z" fill="#48505e"/>
<!-- ground -->
<path d="M0,97 L28,94 L95,91 L180,90 L180,120 L0,120 Z" fill="#ad9473"/>
<path d="M95,91 L180,90 L180,97 L120,96 Z" fill="#b9b0a0"/>
<rect x="104" y="94" width="76" height="3" fill="#c46a5c"/>
<g fill="none" stroke="#6d5c49" stroke-width="3"><path d="M28,120 Q28,100 60,95 L95,92"/><path d="M75,120 Q58,102 100,97"/></g>
<path d="M130,105 L180,101 L180,112 L140,108 Z" fill="#7f8a4e" opacity="0.600"/>
<path d="M0,104 L22,98 L24,100 L0,110 Z" fill="#3a3d44"/>
<path d="M0,110 L24,100 L30,120 L0,120 Z" fill="#857459"/>
</svg></div><div class="ft"><svg class="abs" style="left:7.200px;top:6.900px" width="18" height="16"><use href="#imgico" width="18" height="16"/></svg><span style="letter-spacing:0.64px">23795 - Hospital 3</span></div></div>
<div class="card" style="left:459px;top:397px"><div class="im" style="height:102px"><svg width="180" height="102" viewBox="0 0 180 101" preserveAspectRatio="none">
<rect width="180" height="101" fill="#6c675d"/>
<g filter="url(#b1)">
<path d="M0,0 H74 L0,54 Z" fill="#77736a"/>
<path d="M2,6 L16,0 L24,0 L8,14 Z" fill="#9a958b"/><path d="M30,4 L44,0 L52,2 L38,12 Z" fill="#595449"/>
<path d="M10,29 L22,23 L27,34 L15,40 Z" fill="#a29d92"/><path d="M0,20 L8,17 L11,27 L0,32 Z" fill="#8a857b"/>
<path d="M70,38 L131,0 L131,101 L96,101 Z" fill="#4b4841"/>
<path d="M0,52 L84,0 L118,0 L0,86 Z" fill="#35372e"/>
<path d="M0,60 L96,0 L104,0 L0,68 Z" fill="#2c2f27"/>
<path d="M0,86 L54,46 L58,50 L0,96 Z" fill="#6b4d45"/>
<path d="M0,96 L60,50 L86,74 L40,101 L0,101 Z" fill="#7d766b"/>
<g fill="#a9a296"><path d="M50,64 L64,56 L72,66 L58,74 Z M30,82 L44,73 L52,84 L38,92 Z M66,80 L80,73 L86,84 L73,91 Z M10,92 L24,84 L30,94 L18,101 L12,101 Z M46,90 L58,84 L64,94 L54,100 Z"/></g>
<g fill="#524d45"><path d="M42,76 L50,71 L53,75 L45,80 Z M62,72 L70,68 L72,72 L64,76 Z M22,96 L30,91 L33,96 L26,100 Z"/></g>
<g fill="#b7b2a8">
<path d="M74,36 L88,29 L94,41 L80,48 Z M92,25 L104,17 L110,28 L98,35 Z M104,7 L120,0 L126,10 L112,18 Z M80,52 L94,45 L100,57 L86,64 Z M98,41 L110,34 L116,46 L104,53 Z M112,25 L126,18 L131,29 L118,36 Z M86,68 L100,61 L106,73 L92,80 Z M104,57 L116,50 L122,62 L110,69 Z M118,42 L131,35 L131,50 L124,54 Z M92,84 L106,77 L112,89 L98,96 Z M110,73 L122,66 L128,78 L116,85 Z M124,60 L131,56 L131,72 Z M116,90 L128,83 L131,90 L131,101 L120,101 Z"/></g>
<g fill="#4b4740"><path d="M78,40 L86,36 L89,42 L81,46 Z M96,29 L103,25 L106,31 L99,35 Z M84,56 L92,52 L95,58 L87,62 Z M102,45 L109,41 L112,47 L105,51 Z M90,72 L98,68 L101,74 L93,78 Z M108,61 L115,57 L118,63 L111,67 Z M96,88 L104,84 L107,90 L99,94 Z M114,77 L121,73 L124,79 L117,83 Z M116,29 L123,25 L126,31 L119,35 Z M108,11 L116,7 L119,13 L111,17 Z"/></g>
<path d="M57,40 Q64,36 70,45 Q76,58 74,63 Q70,68 66,60 Q64,52 58,50 Q52,46 57,40 Z" fill="#b98f87" opacity="0.700"/>
</g>
<path d="M57,39.500 Q64,35.500 70,45 Q77,58 75,63.500 Q70,69 66,60 Q64,52 58,50 Q51,46 57,39.500 Z" fill="none" stroke="#62ddd6" stroke-width="1.500"/>
<rect x="118" y="2" width="12" height="6.500" fill="#eef0ef"/>
<rect x="131" y="0" width="46.500" height="101" fill="#1c1e2b"/>
<rect x="177.500" y="0" width="2.500" height="101" fill="#e9e9ea"/>
<rect x="134" y="2.500" width="22" height="3.200" fill="#cfd3dc"/><rect x="134" y="9.500" width="20" height="2.200" fill="#7d8498"/><rect x="134" y="15" width="40" height="1.500" fill="#6a7188"/>
<g fill="#5d6c95" opacity="0.900"><rect x="138" y="21.500" width="8.500" height="78"/><rect x="151.500" y="21.500" width="9" height="78"/></g>
<g stroke="#1c1e2b" stroke-width="0.700"><path d="M136,24.500 H163 M136,27.500 H163 M136,30.500 H163 M136,33.500 H163 M136,36.500 H163 M136,39.500 H163 M136,42.500 H163 M136,45.500 H163 M136,48.500 H163 M136,51.500 H163 M136,54.500 H163 M136,57.500 H163 M136,60.500 H163 M136,63.500 H163 M136,66.500 H163 M136,69.500 H163 M136,72.500 H163 M136,75.500 H163 M136,78.500 H163 M136,81.500 H163 M136,84.500 H163 M136,87.500 H163 M136,90.500 H163 M136,93.500 H163 M136,96.500 H163"/></g>
</svg></div><svg class="abs" style="left:4px;top:4.500px" width="32" height="32" viewBox="0 0 32 32"><circle cx="16" cy="16" r="14.300" fill="#cfcfcf"/><path d="M8.500,16.800 L13.700,21.800 L23.700,10.200" fill="none" stroke="#fff" stroke-width="3.400"/></svg><div class="ft"><svg class="abs" style="left:7.200px;top:6.900px" width="18" height="16"><use href="#imgico" width="18" height="16"/></svg><span style="letter-spacing:0.58px">23694 - Poly01</span></div></div>
<div class="card" style="left:675px;top:397px"><div class="im" style="height:102px"><svg width="180" height="102" viewBox="0 0 180 101" preserveAspectRatio="none">
<rect width="180" height="101" fill="#ece9e4"/>
<g filter="url(#b1)">
<path d="M0,0 H30 L30,30 L0,52 Z" fill="#dcd9d6"/>
<path d="M2,26 L22,20 L26,38 L4,50 Z" fill="#cfcac6"/>
<path d="M0,62 L76,0 L92,0 L0,88 Z" fill="#efeea8"/>
<path d="M0,70 L82,0 L88,0 L0,80 Z" fill="#bfe394"/>
<path d="M0,58 L70,0 L74,0 L0,62 Z" fill="#f8f7f2"/>
<path d="M0,90 L96,0 L100,0 L0,96 Z" fill="#fbfaf7"/>
<g stroke="#fbfaf8" stroke-width="2.600" fill="none"><path d="M14,0 L30,30 L28,42 M66,30 L131,0 M60,40 L96,101 M86,22 L120,101 M104,8 L131,70 M48,52 L0,96 M10,88 L24,101 M70,60 L40,101"/></g>
<g fill="#d2cbc1">
<path d="M76,36 L88,32 L94,46 L82,51 Z M84,52 L96,48 L102,62 L90,67 Z M92,68 L104,64 L110,78 L98,83 Z M100,84 L112,80 L118,94 L106,99 Z"/>
<path d="M100,42 L112,38 L122,64 L110,69 Z M112,70 L124,66 L131,86 L120,92 Z"/>
<path d="M108,6 L118,2 L124,14 L114,19 Z M116,24 L128,20 L131,30 L131,42 L122,40 Z"/>
<path d="M50,60 L62,56 L66,62 L54,70 Z M38,68 L48,62 L54,70 L44,78 Z M26,78 L36,72 L42,80 L32,88 Z M14,88 L24,82 L30,92 L20,98 Z M36,90 L46,86 L50,94 L40,99 Z M68,76 L80,72 L84,84 L72,90 Z M60,92 L72,86 L76,96 L66,101 Z"/></g>
<g fill="#e08a96"><circle cx="44" cy="68" r="1.600"/><circle cx="32" cy="79" r="1.200"/><circle cx="101" cy="84" r="1.200"/><circle cx="112" cy="58" r="1.200"/><circle cx="82" cy="43" r="1.200"/></g>
</g>
<path d="M53,40 Q60,37 66,41 Q72,52 75,60 Q74,66 69,64 Q62,54 56,50 Q49,46 53,40 Z" fill="none" stroke="#6fe3e6" stroke-width="1.600"/>
<rect x="131" y="0" width="46.500" height="101" fill="#1c1e2b"/>
<rect x="177.500" y="0" width="2.500" height="101" fill="#e9e9ea"/>
<rect x="134" y="2.500" width="22" height="3.200" fill="#cfd3dc"/><rect x="134" y="9.500" width="20" height="2.200" fill="#7d8498"/><rect x="134" y="15" width="40" height="1.500" fill="#6a7188"/>
<g fill="#5d6c95" opacity="0.900"><rect x="138" y="21.500" width="8.500" height="78"/><rect x="151.500" y="21.500" width="9" height="78"/></g>
<g stroke="#1c1e2b" stroke-width="0.700"><path d="M136,24.500 H163 M136,27.500 H163 M136,30.500 H163 M136,33.500 H163 M136,36.500 H163 M136,39.500 H163 M136,42.500 H163 M136,45.500 H163 M136,48.500 H163 M136,51.500 H163 M136,54.500 H163 M136,57.500 H163 M136,60.500 H163 M136,63.500 H163 M136,66.500 H163 M136,69.500 H163 M136,72.500 H163 M136,75.500 H163 M136,78.500 H163 M136,81.500 H163 M136,84.500 H163 M136,87.500 H163 M136,90.500 H163 M136,93.500 H163 M136,96.500 H163"/></g>
</svg></div><div class="ft"><svg class="abs" style="left:7.200px;top:6.900px" width="18" height="16"><use href="#imgico" width="18" height="16"/></svg><span style="letter-spacing:0.66px">23695 - Poly02</span></div></div>
<div class="card" style="left:891px;top:397px"><svg class="abs" style="left:0;top:0" width="198" height="165"><use href="#wlogo" width="198" height="165" fill="#6cb33f"/></svg><div class="ft"><svg class="abs" style="left:7.100px;top:6.100px;overflow:visible" width="17.800" height="17.800"><use href="#lnkico" width="17.800" height="17.800" stroke="#a2a2a2"/></svg><span style="letter-spacing:0.62px">1800 - Project Development...</span></div></div>

<!-- RIGHT PANEL -->
<div id="rp"></div>
<svg class="abs" style="left:1445px;top:192px" width="27" height="23.500"><use href="#imgico" width="27" height="23.500"/></svg>
<svg class="abs" style="left:1489px;top:244px" width="359" height="219"><use href="#bmc1" width="359" height="219"/></svg>
<svg class="abs" style="left:1440px;top:487.500px" width="460" height="34" viewBox="1440 488 460 34">
  <!-- edit -->
  <circle cx="1458" cy="505" r="13.500" fill="#5db443"/>
  <g transform="translate(1458,505) rotate(45)"><rect x="-2.600" y="-7.500" width="5.200" height="11.500" fill="#fff"/><path d="M-2.600,5 H2.600 L0,9.500 Z" fill="#fff"/><rect x="-2.600" y="-10" width="5.200" height="1.800" rx="0.600" fill="#fff"/></g>
  <!-- view -->
  <circle cx="1598.500" cy="505" r="13.500" fill="#5db443"/>
  <path d="M1589.500,505 Q1598.500,496 1607.500,505 Q1598.500,514 1589.500,505 Z" fill="#fff"/><circle cx="1598.500" cy="505" r="3.500" fill="#5db443"/><circle cx="1598.500" cy="505" r="1.500" fill="#fff"/>
  <!-- download -->
  <circle cx="1738.500" cy="505" r="13.500" fill="#5db443"/>
  <path d="M1735.800,497 H1741.200 V503 H1745 L1738.500,510 L1732,503 H1735.800 Z" fill="#fff"/><rect x="1731.500" y="511.300" width="14" height="2.400" fill="#fff"/>
  <!-- brush -->
  <g fill="#9c9c9c"><path d="M1888.800,491.600 q2.600,-1.400 4.200,0.500 q1.400,2 -0.400,4.300 L1883.200,509 L1877.200,504 Z"/><path d="M1876,505.200 L1882.200,510.200 Q1881.800,516.600 1875,518 Q1869,518.800 1866,515.200 Q1870,514.600 1871,511.200 Q1871.800,506.200 1876,505.200 Z"/></g>
</svg>
<svg class="abs" style="left:1622px;top:644px" width="44" height="26" viewBox="1622 644 44 26">
  <rect x="1624.800" y="646.800" width="36.400" height="20" rx="10" fill="#fff" stroke="#9b9b9b" stroke-width="2"/>
  <circle cx="1634.800" cy="656.800" r="9" fill="#e7e7e7" stroke="#a5a5a5" stroke-width="1.400"/>
</svg>
<div class="abs ttl" style="left:1489px;top:192px;font-size:18px;line-height:22px;color:#999;letter-spacing:0.65px;white-space:nowrap">1493 - bmc1.jpg</div>
<div class="lb" style="top:551px;letter-spacing:0.77px">Description*</div><div class="vl" style="top:552px;letter-spacing:0.29px">bmc1</div>
<div class="lb" style="top:584px;letter-spacing:0.40px">Notes</div>
<div class="lb" style="top:616px;letter-spacing:0.50px">Geolocation</div>
<div class="lb" style="top:649px;letter-spacing:0.49px">Display in Image Gallery</div>
<div class="lb" style="top:682px;letter-spacing:0.29px">Version</div><div class="vl" style="top:682px">1</div>
<div class="lb" style="top:714px;letter-spacing:0.50px">Added From</div><div class="vl" style="top:715px;letter-spacing:0.60px">Upload</div>
<div class="lb" style="top:747px;letter-spacing:0.39px">Added</div>
<div class="lb" style="top:780px;letter-spacing:0.41px">Added By</div>
<div id="addc" style="letter-spacing:-0.41px">ADD COMMENT</div>

<!-- FAB -->
<div id="fab"><i style="left:10px"></i><i style="left:23.300px"></i><i style="left:37px"></i></div>
</body>
</html>
